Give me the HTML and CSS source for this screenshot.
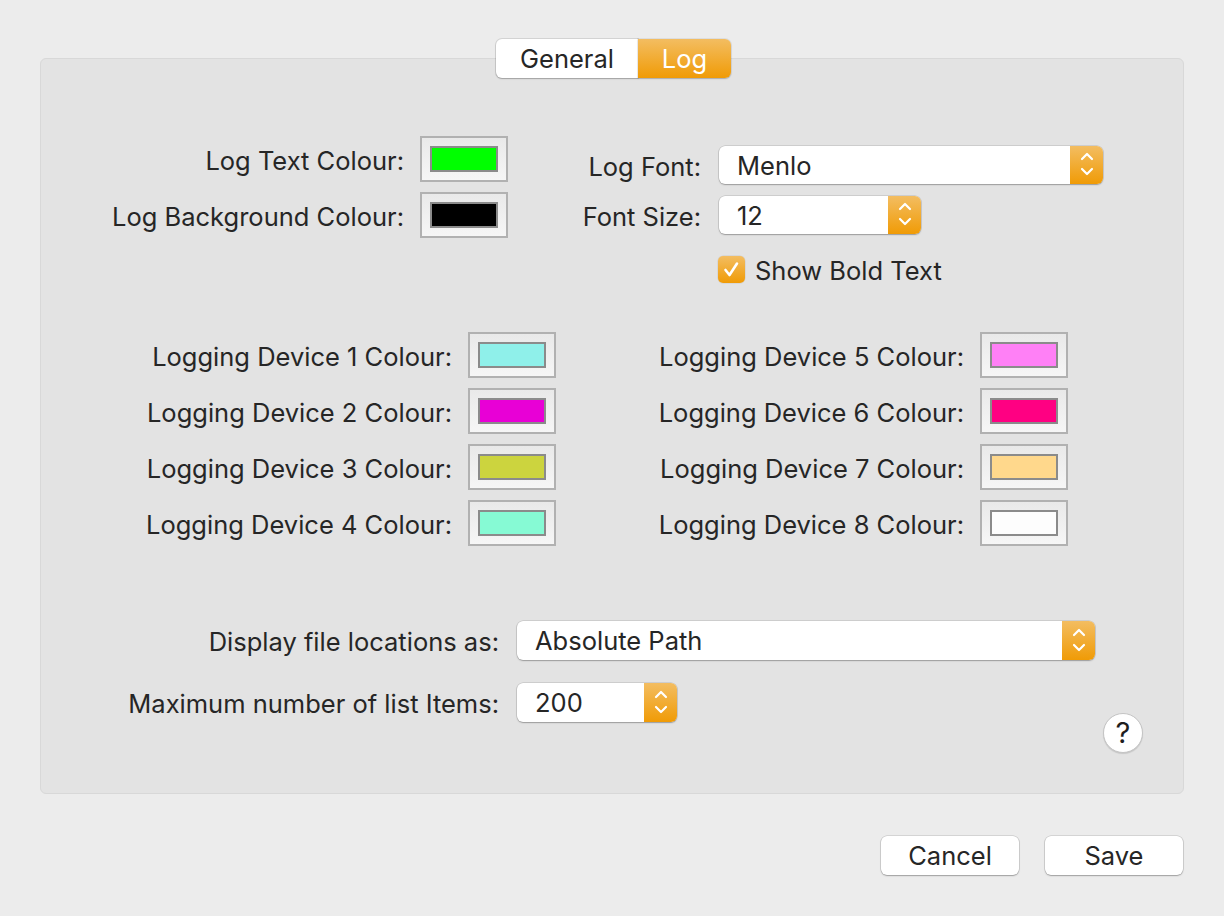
FILE: index.html
```html
<!DOCTYPE html>
<html>
<head>
<meta charset="utf-8">
<link rel="stylesheet" href="styles.css">
</head>
<body>
<div class="window">
  <div class="tabs">
    <div class="seg">General</div>
    <div class="seg active">Log</div>
  </div>
  <div class="panel">
    <div class="top">
      <div class="wells-top">
        <span class="label">Log Text Colour:</span>
        <div class="well"><span class="swatch c-green"></span></div>
        <span class="label">Log Background Colour:</span>
        <div class="well"><span class="swatch c-black"></span></div>
      </div>
      <div class="fonts">
        <span class="label">Log Font:</span>
        <div class="popup font-wide"><span class="ptext">Menlo</span><span class="stepper"><svg width="33" height="38" viewBox="0 0 33 38"><polyline points="12,13 17,8 22,13"/><polyline points="12,23 17,28 22,23"/></svg></span></div>
        <span class="label">Font Size:</span>
        <div class="popup font-small"><span class="ptext">12</span><span class="stepper"><svg width="33" height="38" viewBox="0 0 33 38"><polyline points="12,13 17,8 22,13"/><polyline points="12,23 17,28 22,23"/></svg></span></div>
        <div class="check-row">
          <span class="checkbox"><svg width="27" height="27" viewBox="0 0 27 27"><polyline points="7.5,14 11.5,19 19,7.5"/></svg></span>
          <span class="check-label">Show Bold Text</span>
        </div>
      </div>
    </div>

    <div class="devices">
      <span class="label">Logging Device 1 Colour:</span>
      <div class="well"><span class="swatch c-d1"></span></div>
      <span class="label">Logging Device 5 Colour:</span>
      <div class="well"><span class="swatch c-d5"></span></div>

      <span class="label">Logging Device 2 Colour:</span>
      <div class="well"><span class="swatch c-d2"></span></div>
      <span class="label">Logging Device 6 Colour:</span>
      <div class="well"><span class="swatch c-d6"></span></div>

      <span class="label">Logging Device 3 Colour:</span>
      <div class="well"><span class="swatch c-d3"></span></div>
      <span class="label">Logging Device 7 Colour:</span>
      <div class="well"><span class="swatch c-d7"></span></div>

      <span class="label">Logging Device 4 Colour:</span>
      <div class="well"><span class="swatch c-d4"></span></div>
      <span class="label">Logging Device 8 Colour:</span>
      <div class="well"><span class="swatch c-d8"></span></div>
    </div>

    <div class="files">
      <span class="label">Display file locations as:</span>
      <div class="popup files-wide"><span class="ptext">Absolute Path</span><span class="stepper"><svg width="33" height="39" viewBox="0 0 33 39"><polyline points="12,14 17,9 22,14"/><polyline points="12,24 17,29 22,24"/></svg></span></div>
      <span class="label">Maximum number of list Items:</span>
      <div class="popup files-small"><span class="ptext">200</span><span class="stepper"><svg width="33" height="39" viewBox="0 0 33 39"><polyline points="12,14 17,9 22,14"/><polyline points="12,24 17,29 22,24"/></svg></span></div>
    </div>

    <div class="help-row">
      <button class="help">?</button>
    </div>
  </div>

  <div class="actions">
    <button class="btn">Cancel</button>
    <button class="btn">Save</button>
  </div>
</div>
</body>
</html>
```

FILE: styles.css
```css
* { box-sizing: border-box; }

html, body {
  margin: 0;
  padding: 0;
  background: #ececec;
}

body {
  font-family: "Inter", "Liberation Sans", sans-serif;
  font-size: 25.5px;
  color: #262626;
}

.window {
  width: 1224px;
  height: 916px;
  padding-top: 39px;
}

/* Segmented tabs */
.tabs {
  display: flex;
  justify-content: center;
  position: relative;
  z-index: 1;
  margin-bottom: -20px;
  padding-left: 3px;
}

.seg {
  height: 39px;
  width: 142px;
  display: flex;
  align-items: center;
  justify-content: center;
  background: #ffffff;
  color: #262626;
  border-radius: 6px 0 0 6px;
  box-shadow: 0 0 0 1px rgba(0,0,0,0.10), 0 1px 1.5px rgba(0,0,0,0.22);
}

.seg.active {
  width: 93px;
  color: #ffffff;
  border-radius: 0 6px 6px 0;
  background: linear-gradient(#f3bd61, #f09b06);
  box-shadow: 0 0 0 1px rgba(0,0,0,0.06), 0 1px 1.5px rgba(0,0,0,0.2);
}

/* Group panel */
.panel {
  margin: 0 40px;
  height: 736px;
  background: #e3e3e3;
  border: 1px solid #d8d8d8;
  border-radius: 6px;
}

.label {
  text-align: right;
  align-self: center;
  white-space: nowrap;
  padding-top: 2px;
}

/* Colour wells */
.well {
  width: 88px;
  height: 46px;
  border: 2px solid #b1b1b1;
  background: linear-gradient(#e9e9e9, #f6f6f6);
  padding: 8px;
}

.swatch {
  display: block;
  width: 68px;
  height: 26px;
  border: 2px solid #8b8b8b;
}

.c-green { background: #00ff00; }
.c-black { background: #000000; }
.c-d1 { background: #8ff0ea; }
.c-d2 { background: #e800d6; }
.c-d3 { background: #ccd43e; }
.c-d4 { background: #86fad4; }
.c-d5 { background: #ff80f6; }
.c-d6 { background: #ff0082; }
.c-d7 { background: #ffd88c; }
.c-d8 { background: #fdfdfd; }

/* Top section */
.top {
  display: flex;
  align-items: flex-start;
  margin-top: 77px;
}

.wells-top {
  display: grid;
  grid-template-columns: 363px 88px;
  column-gap: 16px;
  row-gap: 10px;
}

.fonts {
  margin-top: 10px;
  display: grid;
  grid-template-columns: 193px auto;
  column-gap: 18px;
  row-gap: 12px;
  align-items: center;
}

/* Popup buttons */
.popup {
  display: flex;
  align-items: stretch;
  background: #ffffff;
  border-radius: 6px;
  box-shadow: 0 0 0 0.5px rgba(0,0,0,0.18), 0 1px 1.5px rgba(0,0,0,0.25);
}

.ptext {
  flex: 1;
  display: flex;
  align-items: center;
  padding-left: 18px;
}

.stepper {
  width: 33px;
  flex: none;
  display: flex;
  align-items: center;
  justify-content: center;
  border-radius: 0 6px 6px 0;
  background: linear-gradient(#f3bd61, #f09b06);
}

.stepper svg polyline {
  fill: none;
  stroke: #ffffff;
  stroke-width: 2.2;
  stroke-linecap: round;
  stroke-linejoin: round;
}

.font-wide { width: 384px; height: 38px; }
.font-small { width: 202px; height: 38px; }
.files-wide { width: 578px; height: 39px; }
.files-small { width: 160px; height: 39px; }

/* Checkbox */
.check-row {
  grid-column: 2;
  margin-top: 10px;
  margin-left: -1px;
  display: flex;
  align-items: center;
  height: 27px;
  gap: 10px;
}

.check-label {
  padding-top: 2px;
}

.checkbox {
  width: 27px;
  height: 27px;
  border-radius: 5px;
  background: linear-gradient(#f3bd61, #f09b06);
  box-shadow: 0 0 0 0.5px rgba(0,0,0,0.1);
  display: flex;
}

.checkbox polyline {
  fill: none;
  stroke: #ffffff;
  stroke-width: 2.6;
  stroke-linecap: round;
  stroke-linejoin: round;
}

/* Devices grid */
.devices {
  margin-top: 49px;
  display: grid;
  grid-template-columns: 411px 88px 392px 88px;
  column-gap: 16px;
  row-gap: 10px;
}

/* File options */
.files {
  margin-top: 75px;
  display: grid;
  grid-template-columns: 458px auto;
  column-gap: 18px;
  row-gap: 23px;
  justify-items: start;
}

.files .label {
  justify-self: end;
}

/* Help */
.help-row {
  display: flex;
  justify-content: flex-end;
  margin-top: -9px;
  padding-right: 40px;
}

.help {
  width: 40px;
  height: 40px;
  border-radius: 50%;
  background: #ffffff;
  border: 1px solid #c4c4c4;
  box-shadow: 0 1px 1px rgba(0,0,0,0.12);
  font-family: "Inter", "Liberation Sans", sans-serif;
  font-size: 29px;
  font-weight: 400;
  color: #1e1e1e;
  padding: 0 0 1px 0;
  display: flex;
  align-items: center;
  justify-content: center;
}

/* Bottom buttons */
.actions {
  margin-top: 42px;
  display: flex;
  justify-content: flex-end;
  gap: 26px;
  padding-right: 41px;
}

.btn {
  width: 138px;
  height: 39px;
  background: #ffffff;
  border: none;
  border-radius: 6px;
  box-shadow: 0 0 0 0.5px rgba(0,0,0,0.2), 0 1px 1.5px rgba(0,0,0,0.25);
  font-family: "Inter", "Liberation Sans", sans-serif;
  font-size: 25.5px;
  color: #262626;
  padding: 0;
}
```
